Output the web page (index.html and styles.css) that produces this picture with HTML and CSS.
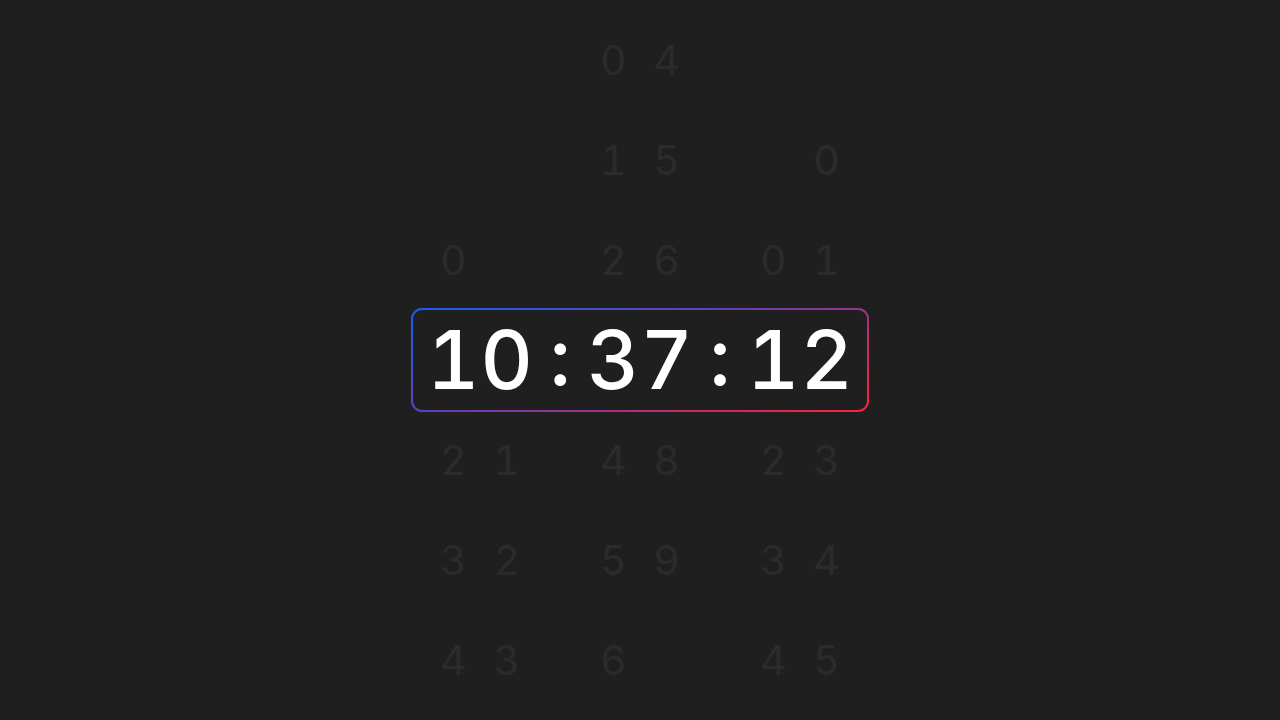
FILE: index.html
```html
<!DOCTYPE html>
<html lang="en">
<head>
<meta charset="utf-8">
<title>Clock</title>
<link rel="stylesheet" href="styles.css">
</head>
<body>
<main class="clock">
  <div class="wheel">
    <span></span><span></span><span></span><span>0</span><span>4</span><span></span><span></span><span></span>
    <span></span><span></span><span></span><span>1</span><span>5</span><span></span><span></span><span>0</span>
    <span>0</span><span></span><span></span><span>2</span><span>6</span><span></span><span>0</span><span>1</span>
    <span></span><span></span><span></span><span></span><span></span><span></span><span></span><span></span>
    <span>2</span><span>1</span><span></span><span>4</span><span>8</span><span></span><span>2</span><span>3</span>
    <span>3</span><span>2</span><span></span><span>5</span><span>9</span><span></span><span>3</span><span>4</span>
    <span>4</span><span>3</span><span></span><span>6</span><span></span><span></span><span>4</span><span>5</span>
  </div>
  <div class="current">
    <span>1</span><span>0</span><span class="sep">:</span><span>3</span><span>7</span><span class="sep">:</span><span>1</span><span>2</span>
  </div>
</main>
</body>
</html>
```

FILE: styles.css
```css
html, body {
  margin: 0;
  padding: 0;
}
body {
  background: #1f1f1f;
  width: 1280px;
  height: 720px;
  display: flex;
  align-items: center;
  justify-content: center;
  font-family: Inter, "Noto Sans", sans-serif;
  font-variant-numeric: tabular-nums;
}
.clock {
  position: relative;
}
.wheel {
  display: grid;
  grid-template-columns: repeat(8, 53.33px);
  grid-template-rows: repeat(7, 100px);
  color: #2b2b2b;
  font-size: 41px;
  line-height: 1;
}
.wheel span {
  display: flex;
  align-items: center;
  justify-content: center;
}
.current {
  position: absolute;
  left: -15.5px;
  right: -15.5px;
  top: 298px;
  height: 104px;
  box-sizing: border-box;
  border: 2px solid transparent;
  border-radius: 11px;
  background:
    linear-gradient(#1f1f1f, #1f1f1f) padding-box,
    linear-gradient(160deg, #1560f0 0%, #6a3db0 45%, #c52b6a 75%, #ff1f3c 100%) border-box;
  display: flex;
  justify-content: center;
  align-items: center;
  color: #ffffff;
  font-size: 81px;
  font-weight: 500;
  line-height: 1;
}
.current span {
  width: 53.33px;
  text-align: center;
}
.current .sep {
  position: relative;
  top: -4px;
}
```
